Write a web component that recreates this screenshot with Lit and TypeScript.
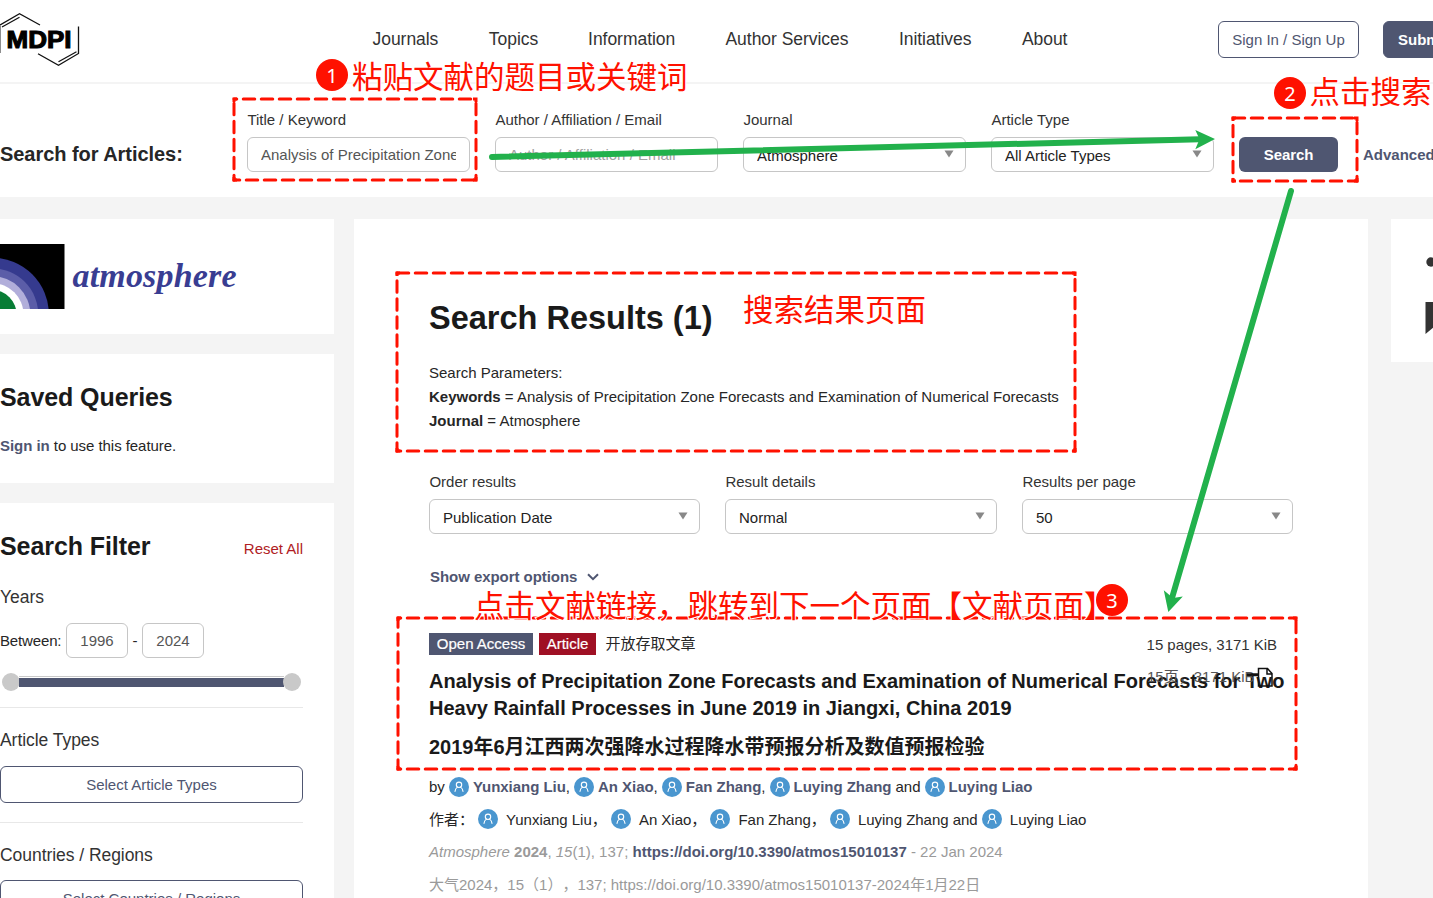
import { LitElement, html, svg, css } from "lit";
import { customElement, property } from "lit/decorators.js";

@customElement("author-icon")
class AuthorIcon extends LitElement {
  static styles = css`
    :host { display: inline-block; width: 20px; height: 20px; vertical-align: -5px; }
    svg { display: block; }
  `;
  render() {
    return html`<svg width="20" height="20" viewBox="0 0 20 20">
      <circle cx="10" cy="10" r="10" fill="#4a96cf"></circle>
      <g fill="none" stroke="#fff" stroke-width="1.1" stroke-linecap="round">
        <circle cx="10" cy="7.800" r="2.700"></circle>
        <path d="M8.400 10.100C7 11 6.200 12.400 6 14.400M11.600 10.100C13 11 13.800 12.400 14 14.400"></path>
      </g>
    </svg>`;
  }
}

@customElement("form-field")
class FormField extends LitElement {
  @property() label = "";
  @property() value = "";
  @property() kind = "select";
  static styles = css`
    :host { display: block; }
    .label { height: 35px; line-height: 35px; white-space: nowrap; color: #333; padding-left: 0.4px; }
    .box {
      box-sizing: border-box; height: 35px; border: 1px solid #c6c6c6; border-radius: 6px;
      padding: 0 13px; display: flex; align-items: center; background: #fff;
      color: #222; overflow: hidden; white-space: nowrap;
    }
    .value { flex: 1; overflow: hidden; padding-top: 2px; }
    .input .value, .placeholder .value { padding-top: 0; }
    .input { color: #555; }
    .placeholder { color: #a2a2a2; }
    .caret { width: 10px; height: 8px; margin: -2px -2px 0 0; }
  `;
  render() {
    return html`<div class="label">${this.label}</div>
      <div class="box ${this.kind}">
        <span class="value">${this.value}</span>
        ${this.kind === "select"
          ? html`<svg class="caret" viewBox="0 0 10 8"><path d="M.5 .5h9L5 7.5z" fill="#888"></path></svg>`
          : null}
      </div>`;
  }
}

interface Frame { x1: number; y1: number; x2: number; y2: number; phase: [number, number, number, number]; }

const FRAMES: Frame[] = [
  { x1: 234, y1: 99, x2: 476, y2: 180, phase: [15, 10, 10, 18] },
  { x1: 1233, y1: 118, x2: 1357, y2: 181, phase: [6, 13, 10, 13] },
  { x1: 397, y1: 273, x2: 1075, y2: 451, phase: [6, 13.5, 12, 16] },
  { x1: 398, y1: 618, x2: 1296, y2: 769, phase: [15, 3.5, 9, 15] },
];
const BADGES = [
  { x: 332, y: 75, n: "1" },
  { x: 1290, y: 93, n: "2" },
  { x: 1112, y: 600, n: "3" },
];
const NOTES = [
  { x: 352, y: 88, t: "粘贴文献的题目或关键词" },
  { x: 1309.5, y: 103, t: "点击搜索" },
  { x: 743, y: 321, t: "搜索结果页面" },
  { x: 474, y: 617, t: "点击文献链接，跳转到下一个页面【文献页面】" },
];

@customElement("guide-overlay")
class GuideOverlay extends LitElement {
  static styles = css`
    :host { position: absolute; inset: 0; pointer-events: none; }
    svg { display: block; }
    .dash { stroke: #ff1100; stroke-width: 3; stroke-linecap: round; stroke-dasharray: 11.5 6.5; }
    .corner { fill: none; stroke: #ff1100; stroke-width: 3; }
    .arrow { stroke: #22b14c; stroke-width: 6; stroke-linecap: round; }
    .head { fill: #22b14c; }
    .note {
      font: 400 30.5px "Noto Sans CJK SC", sans-serif; fill: #ff1100; stroke: #fff;
      stroke-width: 2px; paint-order: stroke; text-spacing-trim: space-all;
    }
    .disc { fill: #ff1100; }
    .num { font: 20px "Noto Sans", sans-serif; fill: #fff; text-anchor: middle; }
  `;
  private side(x1: number, y1: number, x2: number, y2: number, center: number) {
    return svg`<line class="dash" x1=${x1} y1=${y1} x2=${x2} y2=${y2} stroke-dashoffset=${5.75 - center}></line>`;
  }
  render() {
    return html`<svg width="1433" height="898" viewBox="0 0 1433 898">
      ${FRAMES.map((f) => svg`
        ${this.side(f.x1, f.y1, f.x2, f.y1, f.phase[0])}
        ${this.side(f.x1, f.y1, f.x1, f.y2, f.phase[1])}
        ${this.side(f.x2, f.y1, f.x2, f.y2, f.phase[2])}
        ${this.side(f.x1, f.y2, f.x2, f.y2, f.phase[3])}
        <path class="corner" d="M${f.x1} ${f.y1 + 3}V${f.y1}h3M${f.x2 - 3} ${f.y1}H${f.x2}v3M${f.x1} ${f.y2 - 3}V${f.y2}h3M${f.x2 - 3} ${f.y2}H${f.x2}v-3"></path>`)}
      <line class="arrow" x1="492" y1="157" x2="1200" y2="139.3"></line>
      <path class="head" d="M1195.3 130L1215 139L1195.3 149.3L1199.5 139.3z"></path>
      <line class="arrow" x1="1291" y1="191" x2="1172" y2="598"></line>
      <path class="head" d="M1163.8 590.2L1168.3 612L1182.8 596.4L1173 598z"></path>
      ${NOTES.map((n) => svg`<text class="note" x=${n.x} y=${n.y}>${n.t}</text>`)}
      ${BADGES.map((b) => svg`<circle class="disc" cx=${b.x} cy=${b.y} r="16"></circle>
        <text class="num" x=${b.x} y=${b.y + 7.5}>${b.n}</text>`)}
    </svg>`;
  }
}

const NAV = [
  { t: "Journals", w: 116.3 },
  { t: "Topics", w: 99.3 },
  { t: "Information", w: 137.4 },
  { t: "Author Services", w: 173.4 },
  { t: "Initiatives", w: 123 },
  { t: "About", w: 60 },
];

@customElement("app-root")
class AppRoot extends LitElement {
  static styles = css`
    :host {
      display: block; position: relative; width: 1433px; height: 898px; overflow: hidden;
      background: #f4f4f4; color: #262626; line-height: 24px;
      font-family: "Liberation Sans", "Noto Sans CJK SC", sans-serif; font-size: 15px;
      text-spacing-trim: space-all;
    }
    * { box-sizing: border-box; }
    header { height: 84px; background: #fff; border-bottom: 2px solid #f4f4f4; display: flex; width: 1500px; }
    .brand { width: 372.5px; flex: none; }
    nav { display: flex; height: 78px; align-items: center; font-size: 17.5px; letter-spacing: -0.04px; color: #333; width: 845.5px; flex: none; }
    .navitem { flex: none; white-space: nowrap; }
    .btn { height: 37px; border: 1px solid #4f5671; border-radius: 6px; color: #4f5671; display: flex; align-items: center; justify-content: center; background: #fff; white-space: nowrap; }
    .signin { width: 141px; margin-top: 21px; padding-top: 1px; }
    .submit { width: 100px; margin: 21px 0 0 24px; background: #4f5671; color: #fff; font-weight: bold; justify-content: flex-start; padding: 1px 0 0 14px; }
    .searchbar { height: 113px; background: #fff; width: 1500px; display: flex; }
    .searchbar h3 { margin: 0; font-size: 20px; width: 247px; padding-top: 58px; flex: none; font-weight: bold; letter-spacing: -0.05px; }
    .searchbar form-field { width: 223px; margin: 18px 25px 0 0; flex: none; }
    .go { width: 99px; height: 35px; margin-top: 53px; border-radius: 6px; background: #4f5671; color: #fff; font-weight: bold; text-align: center; line-height: 35px; letter-spacing: -0.1px; flex: none; }
    .adv { margin: 59px 0 0 25px; color: #4f5671; font-weight: bold; }
    .cols { display: flex; padding-top: 22px; height: 701px; width: 1500px; }
    aside { width: 334px; flex: none; display: flex; flex-direction: column; gap: 20px; }
    .card { background: #fff; padding-right: 31px; flex: none; }
    .logo { height: 115px; padding-top: 25px; }
    .logo svg { display: block; }
    .saved { height: 129px; letter-spacing: -0.05px; }
    h2 { margin: 0; font-size: 25px; line-height: 30px; font-weight: bold; color: #1a1a1a; letter-spacing: -0.08px; }
    .saved h2 { padding-top: 28px; height: 80px; }
    .link { color: #4f5671; font-weight: bold; }
    .filter { height: 500px; }
    .filterhead { display: flex; justify-content: space-between; padding-top: 28px; height: 82px; }
    .reset { color: #b01c24; padding-top: 6px; }
    .sub { font-size: 17.5px; letter-spacing: -0.05px; color: #333; }
    .years { display: flex; align-items: center; margin-top: 14px; height: 35px; }
    .year { width: 62px; height: 35px; border: 1px solid #c6c6c6; border-radius: 6px; line-height: 33px; text-align: center; color: #555; }
    .years .lead { width: 66px; white-space: nowrap; letter-spacing: -0.15px; }
    .years .to { width: 14px; text-align: center; }
    .slider { display: flex; align-items: center; margin-top: 15px; height: 18px; padding-left: 2px; }
    .knob { width: 18px; height: 18px; border-radius: 50%; background: #c9c9c9; flex: none; }
    .track { width: 265px; margin: -1px -1px 0; height: 11px; background: #4f5671; border-top: 1px solid #c9c9c9; box-shadow: inset 0 1px #fff; }
    .rule { height: 1px; background: #e8e8e8; }
    .rule.a { margin-top: 16px; }
    .rule.b { margin-top: 19px; }
    .rule + .sub { margin-top: 20px; }
    .pick { margin-top: 14px; width: 303px; padding-top: 1px; }
    .pick.last { margin-top: 13px; }
    main { width: 1014px; height: 700px; margin-left: 20px; background: #fff; padding: 79px 75px 0; flex: none; }
    h1 { margin: 0; font-size: 32.5px; line-height: 40px; font-weight: bold; color: #1a1a1a; white-space: nowrap; }
    .params { margin-top: 23px; white-space: nowrap; }
    .options { display: grid; grid-template-columns: 271px 272px 271px; column-gap: 25px; margin-top: 31px; }
    .export { margin-top: 31px; padding-left: 1px; display: flex; align-items: center; gap: 10px; height: 24px; color: #4f5671; font-weight: bold; letter-spacing: -0.05px; }
    .tags { position: relative; display: flex; align-items: center; margin-top: 44px; height: 22px; }
    .tag { height: 22px; line-height: 22px; color: #fff; background: #4f5671; text-align: center; width: 104px; margin-right: 6px; -webkit-text-stroke: 0.2px #fff; }
    .tag.red { background: #9f1024; width: 57px; margin-right: 9.5px; }
    .size { margin-left: auto; margin-right: 16px; color: #333; padding-top: 2px; white-space: nowrap; letter-spacing: -0.03px; }
    .size2 { position: absolute; left: 718px; top: 32px; color: #555; white-space: nowrap; }
    .doc { position: absolute; left: 818px; top: 34px; }
    .title { margin-top: 13px; font-size: 20px; line-height: 27px; font-weight: bold; white-space: nowrap; color: #1a1a1a; }
    .title.cn { margin-top: 11px; padding-top: 1px; height: 28px; }
    .row { white-space: nowrap; height: 24px; }
    .by { margin-top: 14px; letter-spacing: -0.04px; }
    .by author-icon { margin-right: 4px; }
    .by2 { margin-top: 9px; letter-spacing: -0.02px; }
    .by2 author-icon { margin-right: 8px; vertical-align: -4px; }
    .cite { color: #9a9a9a; margin-top: 8px; }
    .cite.second { margin-top: 9px; }
    .tools { width: 100px; height: 143px; background: #fff; margin-left: 23px; padding: 36px 0 0 33px; flex: none; }
    .tools svg { display: block; }
  `;

  render() {
    const name = (t: string) => html`<author-icon></author-icon><span class="link">${t}</span>`;
    return html`
      <header>
        <div class="brand">
          <svg width="82" height="70" viewBox="0 0 82 70">
            <g fill="none" stroke="#111" stroke-width="1.3">
              <path d="M-1 25.5L19.5 13.7L40 25"></path>
              <path d="M2 27L19.5 17.3"></path>
              <path d="M78.5 26.500V53.500L58.500 65.200L38 53.700"></path>
              <path d="M76.500 51.800L58.500 61.800"></path>
              <path d="M.3 26V53" stroke="#888"></path>
            </g>
            <text x="6.500" y="48.300" font-family="Liberation Sans" font-weight="bold" font-size="24.500" textLength="65" lengthAdjust="spacingAndGlyphs" stroke="#000" stroke-width="1.100">MDPI</text>
          </svg>
        </div>
        <nav>${NAV.map((n) => html`<span class="navitem" style="width:${n.w}px">${n.t}</span>`)}</nav>
        <div class="btn signin">Sign In / Sign Up</div>
        <div class="btn submit">Submit</div>
      </header>
      <section class="searchbar">
        <h3>Search for Articles:</h3>
        <form-field label="Title / Keyword" kind="input" value="Analysis of Precipitation Zone Forecasts"></form-field>
        <form-field label="Author / Affiliation / Email" kind="placeholder" value="Author / Affiliation / Email"></form-field>
        <form-field label="Journal" value="Atmosphere"></form-field>
        <form-field label="Article Type" value="All Article Types"></form-field>
        <div class="go">Search</div>
        <div class="adv">Advanced</div>
      </section>
      <div class="cols">
        <aside>
          <div class="card logo">
            <svg width="250" height="65" viewBox="0 0 250 65">
              <defs><clipPath id="sq"><rect width="64.5" height="65"></rect></clipPath></defs>
              <g clip-path="url(#sq)">
                <rect width="65" height="65" fill="#000"></rect>
                <circle cx="-8" cy="70.6" r="56.9" fill="#353a8e"></circle>
                <circle cx="-8" cy="70.6" r="46.3" fill="#5b5da8"></circle>
                <circle cx="-8" cy="70.6" r="38.4" fill="#b1aeda"></circle>
                <circle cx="-8" cy="70.6" r="31.5" fill="#fff"></circle>
                <circle cx="-8" cy="70.6" r="24.6" fill="#087d35"></circle>
              </g>
              <text x="72.5" y="42.7" font-family="Liberation Serif" font-style="italic" font-weight="bold" font-size="34" textLength="164" fill="#393d92">atmosphere</text>
            </svg>
          </div>
          <div class="card saved">
            <h2>Saved Queries</h2>
            <span class="link">Sign in</span> to use this feature.
          </div>
          <div class="card filter">
            <div class="filterhead"><h2>Search Filter</h2><span class="reset">Reset All</span></div>
            <div class="sub">Years</div>
            <div class="years"><span class="lead">Between:</span><span class="year">1996</span><span class="to">-</span><span class="year">2024</span></div>
            <div class="slider"><i class="knob"></i><i class="track"></i><i class="knob"></i></div>
            <div class="rule a"></div>
            <div class="sub">Article Types</div>
            <div class="btn pick">Select Article Types</div>
            <div class="rule b"></div>
            <div class="sub">Countries / Regions</div>
            <div class="btn pick last">Select Countries / Regions</div>
          </div>
        </aside>
        <main>
          <h1>Search Results (1)</h1>
          <div class="params">
            <div>Search Parameters:</div>
            <div><b>Keywords</b> = Analysis of Precipitation Zone Forecasts and Examination of Numerical Forecasts</div>
            <div><b>Journal</b> = Atmosphere</div>
          </div>
          <div class="options">
            <form-field label="Order results" value="Publication Date"></form-field>
            <form-field label="Result details" value="Normal"></form-field>
            <form-field label="Results per page" value="50"></form-field>
          </div>
          <div class="export">Show export options
            <svg width="12" height="8" viewBox="0 0 12 8"><path d="M1 1.200L6 6.200L11 1.200" fill="none" stroke="#4f5671" stroke-width="2"></path></svg>
          </div>
          <div class="tags">
            <span class="tag">Open Access</span><span class="tag red">Article</span><span>开放存取文章</span>
            <span class="size">15 pages, 3171 KiB</span>
            <span class="size2">15页，3171 KiB</span>
            <svg class="doc" width="27" height="22" viewBox="0 0 27 22">
              <path d="M0 7.500H11" stroke="#111" stroke-width="2.500"></path>
              <path d="M11.500 1.500H20.500L25 6.500V19H11.500zM20 1.500V7H25" fill="none" stroke="#111" stroke-width="1.500"></path>
            </svg>
          </div>
          <div class="title">Analysis of Precipitation Zone Forecasts and Examination of Numerical Forecasts for Two<br />Heavy Rainfall Processes in June 2019 in Jiangxi, China 2019</div>
          <div class="title cn">2019年6月江西两次强降水过程降水带预报分析及数值预报检验</div>
          <div class="row by">by ${name("Yunxiang Liu")}, ${name("An Xiao")}, ${name("Fan Zhang")}, ${name("Luying Zhang")} and ${name("Luying Liao")}</div>
          <div class="row by2">作者： <author-icon></author-icon>Yunxiang Liu， <author-icon></author-icon>An Xiao， <author-icon></author-icon>Fan Zhang， <author-icon></author-icon>Luying Zhang and <author-icon></author-icon>Luying Liao</div>
          <div class="row cite"><i>Atmosphere</i> <b>2024</b>, <i>15</i>(1), 137; <span class="link">https://doi.org/10.3390/atmos15010137</span> - 22 Jan 2024</div>
          <div class="row cite second">大气2024，15（1），137; https://doi.org/10.3390/atmos15010137-2024年1月22日</div>
        </main>
        <div class="tools">
          <svg width="60" height="90" viewBox="0 0 60 90">
            <circle cx="7" cy="7" r="4.700" fill="#333"></circle>
            <path d="M1.500 47H40V72H10L1.500 79z" fill="#333"></path>
          </svg>
        </div>
      </div>
      <guide-overlay></guide-overlay>
    `;
  }
}
